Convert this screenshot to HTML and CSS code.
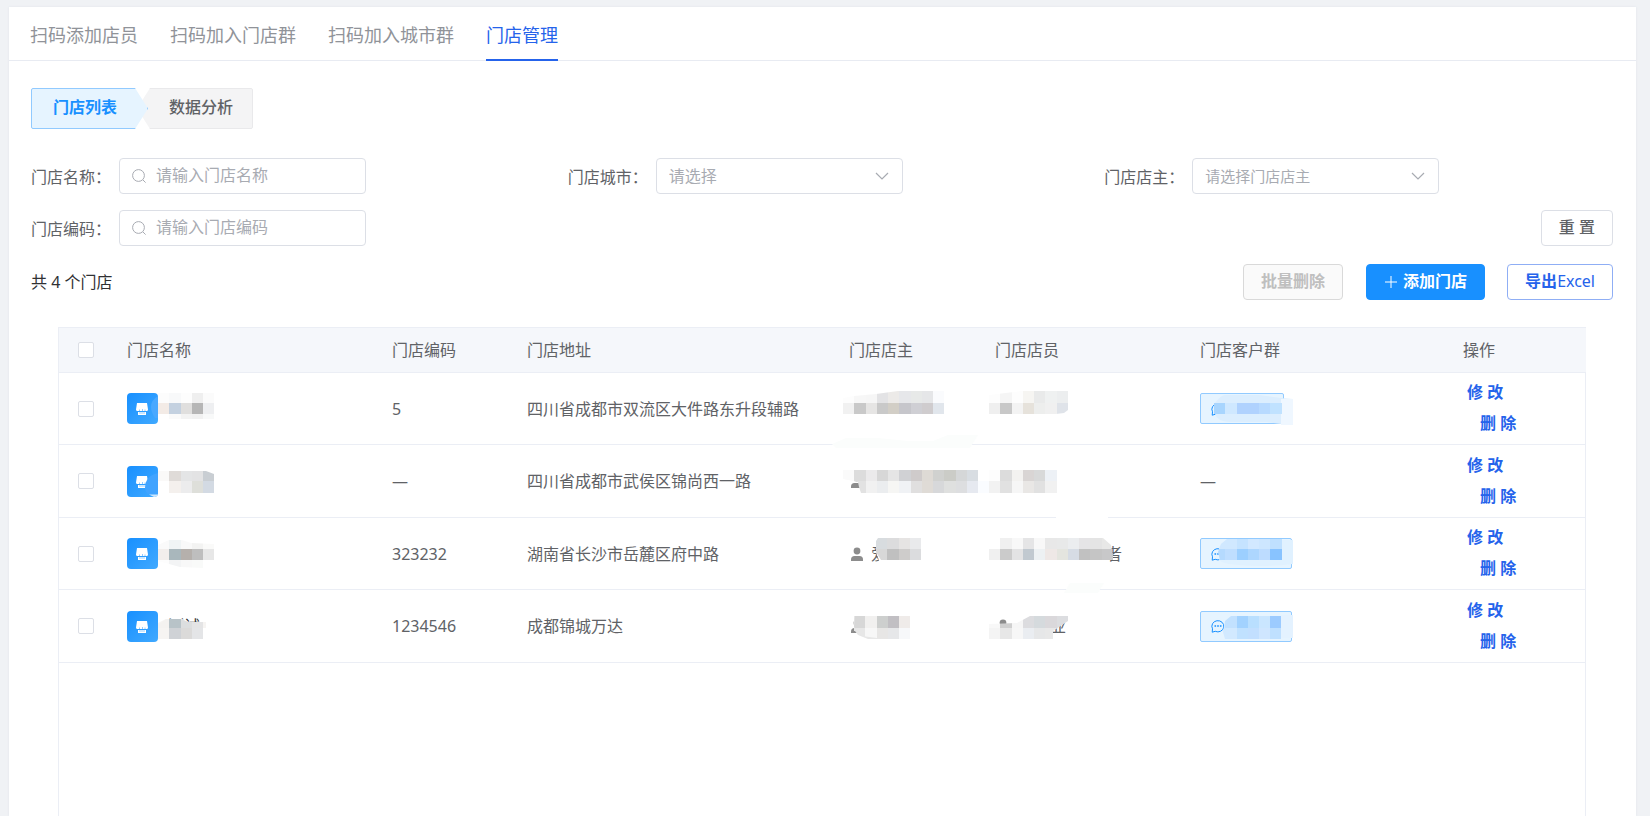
FILE: index.html
```html
<!DOCTYPE html>
<html lang="zh-CN">
<head>
<meta charset="utf-8">
<title>门店管理</title>
<link rel="stylesheet" href="styles.css">
</head>
<body>
<svg width="0" height="0" class="defs" aria-hidden="true">
  <symbol id="i-search" viewBox="0 0 16 16"><circle cx="7.5" cy="7.5" r="5.9" fill="none" stroke="currentColor"/><path d="M12 12l2.6 2.6" stroke="currentColor"/></symbol>
  <symbol id="i-down" viewBox="0 0 14 14"><path d="M1 4l6 6 6-6" fill="none" stroke="currentColor" stroke-width="1.2"/></symbol>
  <symbol id="i-plus" viewBox="0 0 14 14"><path d="M7 1v12M1 7h12" stroke="currentColor"/></symbol>
  <symbol id="i-shop" viewBox="0 0 31 31"><path d="M10 10h10l1 6.500q0 1.500-1.500 1.500h-9Q9 18 9 16.500zM11 19h8v3h-8z" fill="#fff"/><path d="M12.500 16.500v1.500M15.500 16v2M18 16.500v1.500M12 20h6" stroke="#2a98ff" stroke-width=".5"/></symbol>
  <symbol id="i-user" viewBox="0 0 12 14"><circle cx="6" cy="4" r="3.400" fill="currentColor"/><path d="M0 14v-1.500Q0 9 3.500 9h5Q12 9 12 12.500V14z" fill="currentColor"/></symbol>
  <symbol id="i-chat" viewBox="0 0 14 14"><path d="M1.200 13.200L1.500 9.800A6 5.600 0 1 1 4.200 12.300Z" fill="none" stroke="currentColor"/><path d="M3.500 7h1.600M6.200 7h1.600M8.900 7h1.600" stroke="currentColor" stroke-width="1.500"/></symbol>
</svg>
<main class="card">
  <nav class="tabs">
    <a href="#clerk">扫码添加店员</a>
    <a href="#group">扫码加入门店群</a>
    <a href="#city">扫码加入城市群</a>
    <a href="#manage" class="active">门店管理</a>
  </nav>
  <div class="content">
    <div class="steps">
      <button type="button" class="step step-first">门店列表</button>
      <button type="button" class="step step-last">数据分析</button>
    </div>
    <form class="filters">
      <div class="field"><label for="name">门店名称：</label>
        <span class="control"><svg class="lead"><use href="#i-search"/></svg><input id="name" type="text" placeholder="请输入门店名称"></span></div>
      <div class="field"><label for="city-sel">门店城市：</label>
        <span class="control"><select id="city-sel"><option>请选择</option></select><svg class="caret"><use href="#i-down"/></svg></span></div>
      <div class="field"><label for="owner">门店店主：</label>
        <span class="control"><select id="owner" class="small"><option>请选择门店店主</option></select><svg class="caret"><use href="#i-down"/></svg></span></div>
      <div class="field"><label for="code">门店编码：</label>
        <span class="control"><svg class="lead"><use href="#i-search"/></svg><input id="code" type="text" placeholder="请输入门店编码"></span></div>
      <div class="reset"><button type="reset" class="btn">重 置</button></div>
    </form>
    <div class="toolbar">
      <span class="count">共 4 个门店</span>
      <button type="button" class="btn btn-off" disabled>批量删除</button>
      <button type="button" class="btn btn-primary"><svg><use href="#i-plus"/></svg>添加门店</button>
      <button type="button" class="btn btn-line">导出<span>Excel</span></button>
    </div>
    <div class="table-box">
      <table>
        <colgroup><col class="c-check"><col class="c-name"><col class="c-code"><col class="c-addr"><col class="c-owner"><col class="c-clerk"><col class="c-group"><col class="c-act"></colgroup>
        <thead>
          <tr><th class="check"><input type="checkbox" aria-label="全选"></th><th>门店名称</th><th>门店编码</th><th>门店地址</th><th>门店店主</th><th>门店店员</th><th>门店客户群</th><th>操作</th></tr>
        </thead>
        <tbody>
          <tr>
            <td class="check"><input type="checkbox" aria-label="选择门店 1"></td>
            <td><span class="shop"><svg><use href="#i-shop"/><path d="M31 3Q24 7 24 14q0 5 4 11h3z" fill="#48a8ff"/></svg></span>
              <svg class="mosaic" data-x="42" data-y="20,30,41,46" data-rows="fcfcfc f8f9fa fdfdfd efefef fbfbfb|f3ebe6 c4d1e0 e0dfde b6b6b6 eeeff1|ffffff fafafa f3f3f3 f1f1f1 f8f9f9"></svg></td>
            <td>5</td>
            <td>四川省成都市双流区大件路东升段辅路</td>
            <td>
              <svg class="mosaic" data-x="5" data-y="18,30,41" data-clip="0,26 16,23 38,21 60,18 106,18 106,41 0,41" data-rows="fdfdfd f7f7f7 f6f6f6 e3e3e5 eceae8 e6e7ea e7e9e8 e5e6e8 fafbfd|f1f1f1 c9c9c9 e6e5e4 c9c9c9 d2cec6 c6c6cb cfcfd4 cfccce e1e6ec"></svg>
              <svg class="mosaic"><path d="M-6 71L8 65H40L70 68H95L110 62H140L132 75H-2z" fill="#fbfdfc"/></svg></td>
            <td><svg class="mosaic" data-x="5" data-y="18,30,41" data-clip="5,22 38,18 84,18 84,37 80,40 72,41 5,41" data-rows="fdfdfd f5f5f5 fdfdfd f6f5f2 e9eaea eff1f1 eceeef|efefef c8c8c8 f3f3f3 e6e2db edeeed f0f0f0 dfe3e9"></svg></td>
            <td><span class="tag tag-short"><svg><use href="#i-chat"/></svg></span>
              <svg class="mosaic"><path d="M26 30Q32 22 36 22H70L92 25 104 26V52L92 51 78 49H40Q28 48 26 41z" fill="#dceefe"/><path d="M92 26h12v26H92z" fill="#eff7ff"/></svg>
              <svg class="mosaic" data-x="25" data-y="30,41" data-rows="a8d5fe cfe8ff b0d2fe b0d2fe b8daff c0e2ff"></svg></td>
            <td class="act"><button type="button">修 改</button><button type="button">删 除</button></td>
          </tr>
          <tr>
            <td class="check"><input type="checkbox" aria-label="选择门店 2"></td>
            <td><span class="shop"><svg><use href="#i-shop"/><path d="M31 7Q18 10 18 22q1 6 4 6h9z" fill="#40a3ff"/><path d="M22 28.500h9v2.500h-4z" fill="#cde6fd"/></svg></span>
              <svg class="mosaic" data-x="42" data-y="26,36,48" data-clip="42,26 90,26 98,29 98,48 42,48" data-rows="faf9f8 dfdbd8 e4e5e6 e3e3e4 c9ced3|ffffff f4f0ed ececed dedfda d3dae3"></svg></td>
            <td>—</td>
            <td>四川省成都市武侯区锦尚西一路</td>
            <td><span class="person"><svg><use href="#i-user"/></svg></span>
              <svg class="mosaic" data-x="5" data-y="25,36,48" data-clip="5,25 151,25 151,48 23,48 21,42 20,37 5,34" data-rows="fafafa dcdcdc ebeaeb d7d7d7 e5e5e5 d0d1d4 cfcbcb dedad5 d0d1cf cbccc7 d5d7d8 d8dde2 ffffff|ffffff e2e2e2 f1f1f1 ebedef f6f6f4 f0f2f5 e0dfdf dfdbd6 d7d8da dfe0df dddee0 e6e9f0 fafcff"></svg></td>
            <td><svg class="mosaic" data-x="5" data-y="25,36,48" data-rows="fdfdfd dcdcdc f3f2f0 d9d5d4 d8d9d9 edf1f6|f2f2f2 e1e1e1 f6f6f6 e9e7e5 e1e1e1 f1f1f1"></svg>
              <svg class="mosaic"><path d="M72 70H124V74H72z" fill="#fff"/></svg></td>
            <td>—</td>
            <td class="act"><button type="button">修 改</button><button type="button">删 除</button></td>
          </tr>
          <tr>
            <td class="check"><input type="checkbox" aria-label="选择门店 3"></td>
            <td><span class="shop"><svg><use href="#i-shop"/></svg></span>
              <svg class="mosaic" data-x="42" data-y="22,31,42,50" data-clip="42,27 53,22 66,22 75,25 98,26 98,42 87,44 87,50 64,49 42,43" data-rows="fafafa f0f4f5 f9f9f9 f3f3f2 fafaf9|f2eeec a9b7bc b5b0ac bebebe e7e7e7|fdfdfd f3f4f5 f8f8f8 f9faf9 ffffff"></svg></td>
            <td>323232</td>
            <td>湖南省长沙市岳麓区府中路</td>
            <td><span class="person"><svg><use href="#i-user"/></svg>爱</span>
              <svg class="mosaic"><path d="M38 20H60V48H43L38 34z" fill="#fff"/></svg>
              <svg class="mosaic" data-x="38" data-y="20,31,42" data-clip="40,20 84,20 84,42 43,42 38,34 38,23" data-rows="d8dcdf dcdcdd e6e4e3 e9eaec|d8d8d8 c0c0c0 cecccb dbdcde"></svg></td>
            <td><span class="person end">者</span>
              <svg class="mosaic" data-x="5" data-y="20,31,42" data-clip="5,20 119,20 127,27 130,42 5,42" data-rows="ffffff f0f0f0 f8f8f8 e5e5e6 f8f8f8 e8e8e8 e8e9e9 ebedef e5e4e6 e4e4e4 e8e8e7|f0f0f0 cbcbcb e3e3e4 c1c9d0 edf1f3 eee8e6 e4e5df d6dce4 c1c1c1 c5c5c5 c8c8c9"></svg>
              <svg class="mosaic"><path d="M86 65H120L114 75H80z" fill="#fbfdfc"/></svg></td>
            <td><span class="tag"><svg><use href="#i-chat"/></svg></span>
              <svg class="mosaic"><path d="M30 30Q31 25 38 22H104V46Q70 50 40 46 30 44 30 41z" fill="#e0f1ff"/></svg>
              <svg class="mosaic" data-x="25" data-y="21,31,42" data-clip="38,21 104,21 104,42 31,42 29,34 32,26" data-rows="d0e8ff d0e8ff c5e3ff d2e8ff cde6ff bfe0ff|b5dafe bfdeff 9ccfff add6fe bddcff 88c3ff"></svg></td>
            <td class="act"><button type="button">修 改</button><button type="button">删 除</button></td>
          </tr>
          <tr>
            <td class="check"><input type="checkbox" aria-label="选择门店 4"></td>
            <td><span class="shop"><svg><use href="#i-shop"/></svg><span class="shop-name">测试</span></span>
              <svg class="mosaic"><path d="M42 33L50 29H66L72 32H90V49H42z" fill="#f6f4f2"/><path d="M42 38h56v14H42z" fill="#fff"/></svg>
              <svg class="mosaic" data-x="42" data-y="29,38,49" data-clip="42,35 50,29 65,29 72,32 87,32 87,49 42,49" data-rows="f4f2f0 b8c3c8 dcdedf e4e4e5|f6f4f2 cfd2d6 dbdad9 e4e5e7"></svg></td>
            <td>1234546</td>
            <td>成都锦城万达</td>
            <td><span class="person"><svg><use href="#i-user"/></svg></span>
              <svg class="mosaic"><path d="M18 26h54v23H30L20 45 17 41h-1V26z" fill="#e7e7e7"/></svg>
              <svg class="mosaic" data-x="16" data-y="26,38,49" data-clip="17,26 72,26 72,49 46,49 24,46 16,37" data-rows="d7d7d7 f1f0ef cdcfce c1bfc3 efebe9|e7e7e7 f7f7f7 e7e6e5 e6e7e9 f7f8fa"></svg></td>
            <td><span class="person"><svg><use href="#i-user"/></svg></span><span class="person mid">业</span>
              <svg class="mosaic" data-x="5" data-y="26,38,49" data-clip="5,34 33,33 46,26 84,26 84,31 69,41 69,49 5,49" data-rows="f8f8f8 cfcfcf f6f6f6 dcdcdf d5dadd dad8db dcdde0|f4f4f4 e7e7e7 f7f7f7 eaedf1 e6e7e8 e8e8e8 dcdde0"></svg></td>
            <td><span class="tag"><svg><use href="#i-chat"/></svg></span>
              <svg class="mosaic"><path d="M92 25h12v23H92z" fill="#e4f2ff"/></svg>
              <svg class="mosaic" data-x="25" data-y="26,38,49" data-clip="42,26 92,26 92,49 36,49 34,42 36,31" data-rows="d2e9ff c2e1ff a2d2ff b9dfff cae6ff 9ccbff|d2e9ff d2e9ff c0e1ff c2dfff cfe6ff bfe0ff"></svg></td>
            <td class="act"><button type="button">修 改</button><button type="button">删 除</button></td>
          </tr>
        </tbody>
      </table>
    </div>
  </div>
</main>
<script src="mosaic.js"></script>
</body>
</html>
```

FILE: styles.css
```css
* { box-sizing: border-box; }
body {
  margin: 0;
  padding: 7px 14px 0 9px;
  min-height: 100vh;
  display: flex;
  background: #f0f2f5;
  color: #606266;
  font: 16px/24px "Noto Sans", "Noto Sans CJK SC", sans-serif;
}
button, input, select { font: inherit; color: inherit; }
button { cursor: pointer; }
.defs { position: absolute; }
.card {
  flex: 1;
  display: flex;
  flex-direction: column;
  min-width: 0;
  background: #fff;
  box-shadow: 0 0 2px #dfe3ea;
}
.tabs {
  display: flex;
  gap: 32px;
  padding: 0 21px;
  border-bottom: 1px solid #e8ebf2;
}
.tabs a {
  margin-bottom: -1px;
  padding: 16px 0 12px;
  border-bottom: 2px solid transparent;
  color: #909399;
  font-size: 18px;
  text-decoration: none;
}
.tabs .active { color: #2563eb; border-color: #2563eb; }
.content {
  flex: 1;
  display: flex;
  flex-direction: column;
  padding: 27px 23px 0 22px;
}
.steps { display: flex; }
.step {
  height: 41px;
  padding: 0 19px 4px 31px;
  border: 1px solid #e9e9eb;
  border-radius: 2px;
  background: #f4f4f5;
  font-weight: 500;
}
.step-first {
  z-index: 1;
  padding: 0 30px 4px 21px;
  border-color: #91caff;
  background: #e6f4ff;
  color: #1890ff;
  font-weight: 600;
  clip-path: polygon(0 0, calc(100% - 13px) 0, 100% 50%, calc(100% - 13px) 100%, 0 100%);
}
.step-last {
  margin-left: -11px;
  clip-path: polygon(13px 0, 100% 0, 100% 100%, 13px 100%, 0 50%);
}
.filters {
  display: grid;
  grid-template-columns: repeat(3, 1fr);
  row-gap: 16px;
  margin: 29px -28px 0 0;
}
.field { display: flex; align-items: center; }
.field label { width: 88px; padding-top: 2px; white-space: nowrap; }
.control { position: relative; width: 247px; }
.control input, .control select {
  display: block;
  width: 100%;
  height: 36px;
  padding: 0 12px;
  border: 1px solid #dcdfe6;
  border-radius: 4px;
  background: #fff;
  color: #a8abb2;
  appearance: none;
}
.control input { padding: 0 12px 2px 36px; }
.control .small { font-size: 15px; }
input::placeholder { color: #a8abb2; opacity: 1; }
.control svg { position: absolute; color: #a8abb2; }
.lead { left: 12px; top: 10px; width: 16px; height: 16px; }
.caret { right: 14px; top: 11px; width: 14px; height: 14px; pointer-events: none; }
.reset { grid-column: 3; justify-self: end; padding-right: 28px; }
.btn {
  height: 36px;
  padding: 0 17px 2px;
  border: 1px solid #dcdfe6;
  border-radius: 4px;
  background: #fff;
  font-weight: 500;
}
.toolbar {
  display: flex;
  align-items: center;
  margin-top: 18px;
}
.count { flex: 1; color: #303133; }
.btn-off {
  border-color: #d9d9d9;
  background: #fafafa;
  color: #bfbfbf;
  font-weight: 600;
  cursor: default;
}
.btn-primary {
  display: flex;
  align-items: center;
  gap: 5px;
  margin: 0 22px 0 23px;
  border-color: #1890ff;
  background: #1890ff;
  color: #fff;
  font-weight: 600;
}
.btn-primary svg { width: 14px; height: 14px; margin-top: 2px; }
.btn-line { border-color: #8faef5; color: #2563eb; font-weight: 600; }
.btn-line span { font-weight: 400; }
.table-box {
  flex: 1;
  margin: 27px 27px 0 27px;
  border: 1px solid #ebeef5;
  border-bottom: 0;
}
table {
  width: 100%;
  table-layout: fixed;
  border-collapse: separate;
  border-spacing: 0;
}
.c-check { width: 57px; }
.c-name { width: 265px; }
.c-code { width: 135px; }
.c-addr { width: 322px; }
.c-owner { width: 146px; }
.c-clerk { width: 205px; }
.c-group { width: 263px; }
.c-act { width: 134px; }
th, td {
  position: relative;
  padding: 0 11px;
  border-bottom: 1px solid #ebeef5;
  text-align: left;
  font-weight: 400;
  white-space: nowrap;
}
th { height: 45px; background: #f5f7fb; }
td { height: 72px; }
tr:nth-child(even) td { height: 73px; }
.check { padding: 0 0 0 19px; }
.check input {
  display: block;
  width: 16px;
  height: 16px;
  margin: 0;
  border: 1px solid #dcdfe6;
  border-radius: 2px;
  background: #fff;
  appearance: none;
}
.shop { display: flex; align-items: center; color: #303133; }
.shop svg {
  width: 31px;
  height: 31px;
  border-radius: 4px;
  background: linear-gradient(135deg, #1890ff, #40a9ff);
}
.shop-name { margin-left: 10px; }
.person { display: flex; align-items: center; gap: 8px; }
.person svg { width: 12px; height: 14px; margin-left: 2px; color: #8c8c8c; }
.end { padding-left: 111px; }
.mid { position: absolute; left: 66px; top: 24px; }
.tag {
  display: flex;
  align-items: center;
  width: 92px;
  height: 31px;
  padding-left: 10px;
  border: 1px solid #91caff;
  border-radius: 2px;
  background: #e6f4ff;
  color: #1890ff;
}
.tag-short { width: 84px; }
.tag svg { width: 14px; height: 14px; }
.mosaic {
  position: absolute;
  left: 0;
  top: 0;
  width: 1px;
  height: 1px;
  overflow: visible;
  pointer-events: none;
  z-index: 1;
}
.act { padding-bottom: 2px; }
.act button {
  display: block;
  padding: 0 4px;
  border: 0;
  background: none;
  color: #2563eb;
  font-weight: 600;
}
.act button + button { margin: 7px 0 0 13px; }
```

FILE: mosaic.js
```js
// Builds the pixelated privacy masks: rows of 11px cells, optionally clipped to a polygon.
const NS = "http://www.w3.org/2000/svg";
document.querySelectorAll(".mosaic[data-rows]").forEach((svg, n) => {
  const x0 = Number(svg.dataset.x);
  const ys = svg.dataset.y.split(",").map(Number);
  const group = document.createElementNS(NS, "g");
  group.setAttribute("shape-rendering", "crispEdges");
  svg.dataset.rows.split("|").forEach((row, r) => {
    row.split(" ").forEach((color, c) => {
      const left = x0 + Math.round(c * 11.25);
      const right = x0 + Math.round((c + 1) * 11.25);
      const rect = document.createElementNS(NS, "rect");
      rect.setAttribute("x", left);
      rect.setAttribute("y", ys[r]);
      rect.setAttribute("width", right - left);
      rect.setAttribute("height", ys[r + 1] - ys[r]);
      rect.setAttribute("fill", "#" + color);
      group.append(rect);
    });
  });
  if (svg.dataset.clip) {
    const clip = document.createElementNS(NS, "clipPath");
    const poly = document.createElementNS(NS, "polygon");
    clip.id = "mask-" + n;
    poly.setAttribute("points", svg.dataset.clip);
    clip.append(poly);
    svg.append(clip);
    group.setAttribute("clip-path", "url(#mask-" + n + ")");
  }
  svg.append(group);
});
```
